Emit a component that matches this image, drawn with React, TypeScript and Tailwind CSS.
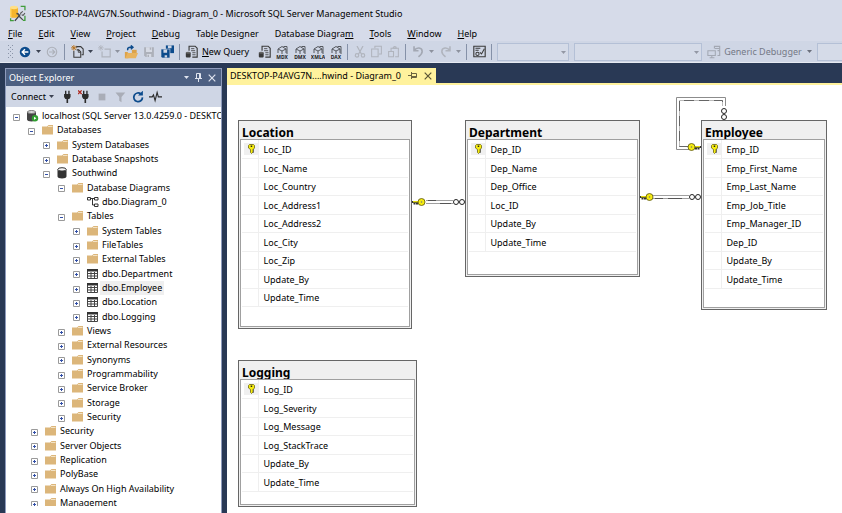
/**
 * Database diagram workspace
 *
 * - Title bar, menu bar and main toolbar
 * - Object Explorer tree on the left
 * - Diagram document with table cards and relationships
 */

import type { ReactNode } from "react";
import clsx from "clsx";

/* ---------- Icons ---------- */

function Icon({ children, size = 14 }: { children: ReactNode; size?: number }) {
  return (
    <svg width={size} height={size} viewBox="0 0 16 16" fill="none" className="shrink-0" aria-hidden="true">
      {children}
    </svg>
  );
}

function Caret({ color = "#3b4252" }: { color?: string }) {
  return (
    <svg width="5" height="3" viewBox="0 0 5 3" className="shrink-0" aria-hidden="true">
      <path d="M0 0h5L2.5 3z" fill={color} />
    </svg>
  );
}

const AppLogo = () => (
  <Icon size={17}>
    <path d="M1 2.5v8c0 1 1.6 1.6 3.6 1.6s3.900-.6 3.900-1.600v-8z" fill="#f5b52c" />
    <path d="M1 2.5v8c0 .6.5 1 1.300 1.300V2.500z" fill="#ffd76a" />
    <ellipse cx="4.7" cy="2.3" rx="3.7" ry="1.6" fill="#ffdf86" />
    <path d="M11 1.200h4V5M15 10v4.500h-2M1.500 12.500v2.300h3" stroke="#3f9c3a" strokeWidth="1.2" />
    <path d="M5.500 15l5-6" stroke="#3c3c3c" strokeWidth="1.2" />
    <path d="M7 8c2 0 2.500 1 2.500 2.500l3.500 3.500" stroke="#4a4a4a" strokeWidth="1.2" />
    <path d="M11 9V7.500L13 6M12 9.500h1.500l1.500-2" stroke="#555" />
  </Icon>
);

const BackIcon = () => (
  <Icon size={12}>
    <circle cx="8" cy="8" r="7" fill="#0c4b8c" />
    <path d="M12.500 8h-8M8 4.300 4.300 8 8 11.700" stroke="#fff" strokeWidth="1.9" />
  </Icon>
);

const ForwardIcon = () => (
  <Icon size={12}>
    <circle cx="8" cy="8" r="6.300" stroke="#adb1ba" strokeWidth="1.5" />
    <path d="M4 8h7.500M8.500 4.800 11.700 8l-3.200 3.200" stroke="#adb1ba" strokeWidth="1.6" />
  </Icon>
);

const NewProjectIcon = () => (
  <Icon size={13}>
    <path d="M7 3.500V2h5l3 3v7h-2" stroke="#3a3a3a" strokeWidth="1.3" />
    <path d="M3.500 7.500V15H12V8.500L9.500 6H7" stroke="#3a3a3a" strokeWidth="1.3" />
    <path d="M9 6v3h3" stroke="#3a3a3a" />
    <path d="M3.500 0v7M0 3.500h7M1 1l5 5M6 1 1 6" stroke="#b8731c" strokeWidth="1.1" />
  </Icon>
);

const AddItemIcon = () => (
  <Icon size={13}>
    <path d="M8 5h7v9.500H5V8" stroke="#b0b4bd" strokeWidth="1.5" />
    <path d="M3.500 0v7M0 3.500h7M1 1l5 5M6 1 1 6" stroke="#b0b4bd" />
  </Icon>
);

const OpenIcon = () => (
  <Icon>
    <path d="M1 8h3l1 1.500V15H1z" fill="#dca24a" />
    <path d="M9 5.500h5.500V10H9z" fill="#dca24a" />
    <path d="M4 9h12l-2.500 6h-12z" fill="#e8b35e" />
    <path d="M4.500 6C3.500 4 5 2.500 7.500 2.500H10M7.800.5l2.400 2-2.400 2.300" stroke="#0c4b8c" strokeWidth="1.7" />
  </Icon>
);

const SaveIcon = () => (
  <Icon size={12}>
    <path d="M1.500 1.500h13v13h-11l-2-2z" fill="#adb1ba" />
    <path d="M4 1.500h8V8H4zM5 10.500h6v4H5z" fill="#d6dae4" />
    <path d="M6 11.500h2v3H6zM9 2h2v3H9z" fill="#adb1ba" />
  </Icon>
);

const SaveAllIcon = () => (
  <Icon size={13}>
    <path d="M6 .5h10V10H6z" fill="#0c4b8c" />
    <path d="M8.500.5H13V4H8.500z" fill="#cfd6e5" />
    <path d="M0 5h11v11H1.500L0 14.500z" fill="#0c4b8c" stroke="#cfd6e5" strokeWidth=".8" />
    <path d="M3 5.500h4.500v4H3zM4.500 12.500h3v3h-3z" fill="#cfd6e5" />
  </Icon>
);

const QueryIcon = () => (
  <Icon size={13}>
    <path d="M5 7V1.500h7.500L15 4v11H9" stroke="#3a3a3a" strokeWidth="1.4" />
    <path d="M7.500 4.500h4M7.500 7h5M9 9.500h4M9 12h4" stroke="#3a3a3a" />
    <path d="M1 9.500h6V14c0 1-1.300 1.500-3 1.500S1 15 1 14z" fill="#3a3a3a" />
    <ellipse cx="4" cy="9.500" rx="3" ry="1.300" fill="#666" />
  </Icon>
);

/* Cube over a short language tag (MDX, DMX, XMLA, DAX) */
function CubeQueryIcon({ tag }: { tag: string }) {
  return (
    <svg width="14" height="14" viewBox="0 0 14 14" fill="none" aria-hidden="true">
      <path d="M3 8V4l4-2.500L11 4v4M3 4l4 2 4-2M7 6v3M8.500 1.500H12V9" stroke="#55585e" />
      <text x="7" y="13.5" textAnchor="middle" fontSize="5" fontWeight="700" fill="#222">
        {tag}
      </text>
    </svg>
  );
}

const CutIcon = () => (
  <Icon size={12}>
    <path d="M4 0l6 11M12 0 6 11" stroke="#b0b4bd" strokeWidth="1.6" />
    <circle cx="4" cy="12.500" r="2.300" stroke="#b0b4bd" strokeWidth="1.5" />
    <circle cx="12" cy="12.500" r="2.300" stroke="#b0b4bd" strokeWidth="1.5" />
  </Icon>
);

const CopyIcon = () => (
  <Icon size={13}>
    <path d="M6 4V1.500h8V11h-3" stroke="#b0b4bd" strokeWidth="1.3" />
    <path d="M2 5h8v9.500H2z" stroke="#b0b4bd" strokeWidth="1.3" />
  </Icon>
);

const PasteIcon = () => (
  <Icon size={13}>
    <path d="M5 8V4h9v10.500h-4" stroke="#b0b4bd" strokeWidth="1.3" />
    <path d="M7.500 4a2 2 0 0 1 4 0z" stroke="#b0b4bd" strokeWidth="1.3" />
    <path d="M2 8h6v6.500H2z" stroke="#b0b4bd" strokeWidth="1.3" />
  </Icon>
);

const UndoIcon = () => (
  <Icon size={13}>
    <path
      d="M2.500 1.500V7H8M3 6.500C5.500 2.500 12.500 2.500 12.500 8c0 3-2 4.500-4.500 6.500"
      stroke="#a3a8b3"
      strokeWidth="2"
    />
  </Icon>
);

const RedoIcon = () => (
  <Icon size={13}>
    <path
      d="M13.500 1.500V7H8M13 6.500C10.500 2.500 3.500 2.500 3.500 8c0 3 2 4.500 4.500 6.500"
      stroke="#b0b4bd"
      strokeWidth="1.9"
    />
  </Icon>
);

const ActivityIcon = () => (
  <Icon size={13}>
    <path d="M1 14.500v-13h14v13z" stroke="#3a3a3a" strokeWidth="1.4" />
    <path d="M3 4h6M3 6.500h4M8.500 9l2 2L14 4.500" stroke="#3a3a3a" strokeWidth="1.3" />
    <circle cx="5.500" cy="11" r="2" stroke="#3a3a3a" strokeWidth="1.3" />
  </Icon>
);

const DebuggerIcon = () => (
  <Icon>
    <path d="M1 6.500h8.500V12H1zM5.500 12v2.500M3 14.500h5.500" stroke="#a3a8b3" strokeWidth="1.2" />
    <path d="M8.500 4V1.500h6V12H12M9 4h5M12 6.500h2" stroke="#a3a8b3" strokeWidth="1.3" />
  </Icon>
);

const PlugIcon = ({ cross = false }: { cross?: boolean }) => (
  <Icon size={13}>
    <path d="M7 1v4M11 1v4" stroke="#2b2b2b" strokeWidth="1.7" />
    <path d="M5 5h8v3.500L11.500 11h-5L5 8.500z" fill="#2b2b2b" />
    <path d="M9 11v5" stroke="#2b2b2b" strokeWidth="2" />
    {cross && <path d="M0 .5 4.500 5M4.500.5 0 5" stroke="#b0281e" strokeWidth="1.6" />}
  </Icon>
);

const StopIcon = () => (
  <Icon size={12}>
    <path d="M3.500 3.500h9v9h-9z" fill="#a9adb7" />
  </Icon>
);

const FilterIcon = () => (
  <Icon size={12}>
    <path d="M2 2h13l-5 6v7l-3-2V8z" fill="#a9adb7" />
  </Icon>
);

const RefreshIcon = () => (
  <Icon size={12}>
    <path d="M12 4A5.800 5.800 0 1 0 14 8.500" stroke="#0c4b8c" strokeWidth="2.3" />
    <path d="M8 6h6.500V-.5z" fill="#0c4b8c" />
  </Icon>
);

const PulseIcon = () => (
  <Icon size={13}>
    <path d="M0 8.500h4L5.500 6l2 7L10 3l1.500 5.500H16" stroke="#2b2b2b" strokeWidth="1.4" />
  </Icon>
);

const PinIcon = ({ color, className }: { color: string; className?: string }) => (
  <svg width="7" height="9" viewBox="0 0 7 9" fill="none" className={className} aria-hidden="true">
    <path d="M1.500 5V.5h4V5M4.500.5V5M0 5.500h7M3.500 5.500V9" stroke={color} />
  </svg>
);

const CloseIcon = ({ color }: { color: string }) => (
  <svg width="8" height="8" viewBox="0 0 8 8" fill="none" aria-hidden="true">
    <path d="M.7.7l6.600 6.600M7.300.7.7 7.300" stroke={color} strokeWidth="1.2" />
  </svg>
);

const FolderIcon = () => (
  <svg width="12" height="12" viewBox="0 0 12 12" aria-hidden="true">
    <path d="M0 2.500h5L6.500 1H11v9.500H0z" fill="#dcb67a" />
    <path d="M6 2.500h4.500" stroke="#f3e3c6" />
  </svg>
);

const DatabaseIcon = () => (
  <svg width="12" height="12" viewBox="0 0 12 12" aria-hidden="true">
    <path d="M.5 2.500v7c0 1.200 2 2 4.500 2s4.500-.8 4.500-2v-7z" fill="#333" />
    <ellipse cx="5" cy="2.400" rx="4.200" ry="1.700" fill="#f6f6f6" stroke="#333" />
  </svg>
);

const ServerIcon = () => (
  <svg width="12" height="12" viewBox="0 0 12 12" aria-hidden="true">
    <path d="M0 1.800v7.700c0 1.300 2 2 4.500 2s4.500-.7 4.500-2V1.800z" fill="#444" />
    <ellipse cx="4.500" cy="2" rx="4" ry="1.500" fill="#d8d8d8" stroke="#777" />
    <circle cx="8" cy="8.300" r="3.200" fill="#2f9e2f" />
    <path d="M7 6.800v3l2.400-1.500z" fill="#fff" />
  </svg>
);

const TableIcon = () => (
  <svg width="12" height="12" viewBox="0 0 12 12" fill="none" aria-hidden="true">
    <path d="M.5 1.500h10v9H.5zM.5 5.500h10M.5 8h10M4 4v6.500M7.500 4v6.500" stroke="#444" />
    <path d="M0 1h11v2.500H0z" fill="#333" />
  </svg>
);

const DiagramIcon = () => (
  <svg width="12" height="12" viewBox="0 0 12 12" fill="none" aria-hidden="true">
    <path
      d="M.5 1.500h3V4h-3zM7.500 1.500H11V4H7.500zM7.500 8H11v2.500H7.500zM3.500 2.500h4M5.500 2.500V9h2"
      stroke="#333"
    />
  </svg>
);

const KeyIcon = () => (
  <svg width="7" height="10" viewBox="0 0 7 10" aria-hidden="true">
    <path
      d="M1.500.5h4l1 1V4L5 5.500V8L3.500 9.500l-1-1v-3L.5 4V1.500z"
      fill="#f6ec10"
      stroke="#6b6410"
      strokeWidth=".8"
    />
    <path d="M2.700 1.500h1.500V3H2.700zM5 5.500h1v1H5zM5 7.500h1v1H5z" fill="#222" />
  </svg>
);

/* ---------- Title, menu, toolbar ---------- */

/* Text before the access key, the key itself, text after it */
const MENU: [string, string, string][] = [
  ["", "F", "ile"],
  ["", "E", "dit"],
  ["", "V", "iew"],
  ["", "P", "roject"],
  ["", "D", "ebug"],
  ["Tab", "l", "e Designer"],
  ["Database Diagra", "m", ""],
  ["", "T", "ools"],
  ["", "W", "indow"],
  ["", "H", "elp"],
];

interface ToolButtonProps {
  label: string;
  children: ReactNode;
  disabled?: boolean;
  narrow?: boolean;
}

function ToolButton({ label, children, disabled, narrow }: ToolButtonProps) {
  return (
    <button
      type="button"
      aria-label={label}
      disabled={disabled}
      className={clsx("flex h-5 shrink-0 items-center justify-center", narrow ? "w-[17px]" : "w-[18px]")}
    >
      {children}
    </button>
  );
}

function DropButton({ label, muted }: { label: string; muted?: boolean }) {
  return (
    <button type="button" aria-label={label} className="flex h-5 w-[9px] shrink-0 items-center justify-center">
      <Caret color={muted ? "#8d929e" : "#3b4252"} />
    </button>
  );
}

const Separator = () => <span className="mx-[3px] h-4 w-px shrink-0 bg-[#8591a8]" />;

function Combo({ label, className }: { label: string; className: string }) {
  return (
    <span className={clsx("relative flex h-[18px] shrink-0", className)}>
      <select
        aria-label={label}
        disabled
        className="w-full appearance-none border border-[#b4c0d6] bg-[#d5dbe8]"
      />
      <span className="absolute right-[3px] top-[8px]">
        <Caret color="#9398a4" />
      </span>
    </span>
  );
}

function MainToolbar() {
  return (
    <div className="flex h-[21px] items-center overflow-hidden bg-[#cfd6e5] pl-2">
      <svg width="6" height="14" aria-hidden="true" className="mr-[2px] shrink-0">
        <pattern id="grip" width="4" height="4" patternUnits="userSpaceOnUse">
          <path d="M0 0h1v1H0zM2 2h1v1H2z" fill="#8a94a8" />
        </pattern>
        <rect width="6" height="14" fill="url(#grip)" />
      </svg>
      <ToolButton label="Navigate backward"><BackIcon /></ToolButton>
      <DropButton label="Backward history" />
      <ToolButton label="Navigate forward" disabled><ForwardIcon /></ToolButton>
      <Separator />
      <ToolButton label="New project"><NewProjectIcon /></ToolButton>
      <DropButton label="New project options" />
      <ToolButton label="Add item" disabled><AddItemIcon /></ToolButton>
      <DropButton label="Add item options" muted />
      <ToolButton label="Open file"><OpenIcon /></ToolButton>
      <ToolButton label="Save" disabled><SaveIcon /></ToolButton>
      <ToolButton label="Save all"><SaveAllIcon /></ToolButton>
      <Separator />
      <button type="button" className="flex h-5 shrink-0 items-center gap-1 px-[2px]">
        <QueryIcon />
        <span><u>N</u>ew Query</span>
      </button>
      <span className="w-1 shrink-0" />
      <ToolButton label="Database engine query"><QueryIcon /></ToolButton>
      <ToolButton label="MDX query"><CubeQueryIcon tag="MDX" /></ToolButton>
      <ToolButton label="DMX query"><CubeQueryIcon tag="DMX" /></ToolButton>
      <ToolButton label="XMLA query"><CubeQueryIcon tag="XMLA" /></ToolButton>
      <ToolButton label="DAX query" narrow><CubeQueryIcon tag="DAX" /></ToolButton>
      <Separator />
      <ToolButton label="Cut" disabled narrow><CutIcon /></ToolButton>
      <ToolButton label="Copy" disabled narrow><CopyIcon /></ToolButton>
      <ToolButton label="Paste" disabled narrow><PasteIcon /></ToolButton>
      <Separator />
      <ToolButton label="Undo" disabled><UndoIcon /></ToolButton>
      <DropButton label="Undo history" muted />
      <ToolButton label="Redo" disabled><RedoIcon /></ToolButton>
      <DropButton label="Redo history" muted />
      <Separator />
      <ToolButton label="Activity monitor"><ActivityIcon /></ToolButton>
      <Separator />
      <Combo label="Solution configuration" className="ml-[2px] w-[72px]" />
      <Combo label="Solution platform" className="ml-[5px] w-32" />
      <button type="button" disabled className="ml-[5px] flex h-5 shrink-0 items-center gap-[3px] text-[#747985]">
        <DebuggerIcon />
        <span>Generic Debugger</span>
        <span className="ml-[2px]"><Caret color="#6b707c" /></span>
      </button>
      <input
        aria-label="Find"
        className="ml-[5px] h-[18px] w-0 min-w-0 flex-1 border border-r-0 border-[#b4c0d6] bg-[#d5dbe8]"
      />
    </div>
  );
}

/* ---------- Object Explorer ---------- */

type NodeKind = "server" | "folder" | "database" | "table" | "diagram";

interface TreeNode {
  label: string;
  depth: string;
  kind: NodeKind;
  open?: boolean;
  selected?: boolean;
}

const D0 = "pl-[7px]";
const D1 = "pl-[22px]";
const D1_SERVER = "pl-[25px]";
const D2 = "pl-[37px]";
const D3 = "pl-[52px]";
const D4 = "pl-[67px]";

const TREE: TreeNode[] = [
  { label: "localhost (SQL Server 13.0.4259.0 - DESKTOP", depth: D0, kind: "server", open: true },
  { label: "Databases", depth: D1, kind: "folder", open: true },
  { label: "System Databases", depth: D2, kind: "folder" },
  { label: "Database Snapshots", depth: D2, kind: "folder" },
  { label: "Southwind", depth: D2, kind: "database", open: true },
  { label: "Database Diagrams", depth: D3, kind: "folder", open: true },
  { label: "dbo.Diagram_0", depth: D4, kind: "diagram" },
  { label: "Tables", depth: D3, kind: "folder", open: true },
  { label: "System Tables", depth: D4, kind: "folder" },
  { label: "FileTables", depth: D4, kind: "folder" },
  { label: "External Tables", depth: D4, kind: "folder" },
  { label: "dbo.Department", depth: D4, kind: "table" },
  { label: "dbo.Employee", depth: D4, kind: "table", selected: true },
  { label: "dbo.Location", depth: D4, kind: "table" },
  { label: "dbo.Logging", depth: D4, kind: "table" },
  { label: "Views", depth: D3, kind: "folder" },
  { label: "External Resources", depth: D3, kind: "folder" },
  { label: "Synonyms", depth: D3, kind: "folder" },
  { label: "Programmability", depth: D3, kind: "folder" },
  { label: "Service Broker", depth: D3, kind: "folder" },
  { label: "Storage", depth: D3, kind: "folder" },
  { label: "Security", depth: D3, kind: "folder" },
  { label: "Security", depth: D1_SERVER, kind: "folder" },
  { label: "Server Objects", depth: D1_SERVER, kind: "folder" },
  { label: "Replication", depth: D1_SERVER, kind: "folder" },
  { label: "PolyBase", depth: D1_SERVER, kind: "folder" },
  { label: "Always On High Availability", depth: D1_SERVER, kind: "folder" },
  { label: "Management", depth: D1_SERVER, kind: "folder" },
];

const NODE_ICONS: Record<NodeKind, () => ReactNode> = {
  server: ServerIcon,
  folder: FolderIcon,
  database: DatabaseIcon,
  table: TableIcon,
  diagram: DiagramIcon,
};

function Expander({ open, label }: { open?: boolean; label: string }) {
  return (
    <button type="button" aria-label={label} aria-expanded={!!open} className="mt-[2px] block">
      <svg width="7" height="7" viewBox="0 0 7 7" fill="none" aria-hidden="true">
        <path d="M.5.5h6v6h-6z" fill="#fff" stroke="#9a9a9a" />
        <path d={open ? "M2 3.500h3" : "M2 3.500h3M3.500 2v3"} stroke="#3350a8" />
      </svg>
    </button>
  );
}

function ObjectExplorer() {
  return (
    <aside className="flex w-[217px] shrink-0 flex-col border border-b-0 border-[#8e9bbc] bg-white">
      <header className="flex h-[17px] shrink-0 items-center gap-[6px] bg-[#4d6082] pl-[3px] pr-[5px] text-white">
        <h2 className="flex-1">Object Explorer</h2>
        <button type="button" aria-label="Window position"><Caret color="#dfe4ef" /></button>
        <button type="button" aria-label="Auto hide"><PinIcon color="#dfe4ef" /></button>
        <button type="button" aria-label="Close Object Explorer"><CloseIcon color="#dfe4ef" /></button>
      </header>
      <div className="flex h-[21px] shrink-0 items-center bg-[#cfd6e5] pl-[5px]">
        <button type="button" className="mr-1 flex items-center gap-[3px]">
          Connect <Caret />
        </button>
        <ToolButton label="Connect object explorer"><PlugIcon /></ToolButton>
        <ToolButton label="Disconnect"><PlugIcon cross /></ToolButton>
        <ToolButton label="Stop" disabled narrow><StopIcon /></ToolButton>
        <ToolButton label="Filter" disabled><FilterIcon /></ToolButton>
        <ToolButton label="Refresh"><RefreshIcon /></ToolButton>
        <ToolButton label="Activity" narrow><PulseIcon /></ToolButton>
      </div>
      <ul className="mb-[7px] mt-[2px] min-h-0 flex-1 overflow-hidden">
        {TREE.map((node, i) => {
          const NodeIcon = NODE_ICONS[node.kind];
          return (
            <li key={i} className={clsx("flex h-[14px] items-center nth-[3n]:h-[15px]", node.depth)}>
              <span className="w-[14px] shrink-0">
                {node.kind !== "diagram" && <Expander open={node.open} label={node.label} />}
              </span>
              <span className="w-[13px] shrink-0"><NodeIcon /></span>
              <span
                className={clsx("whitespace-nowrap px-[2px] leading-[14px]", node.selected && "bg-[#efefef]")}
              >
                {node.label}
              </span>
            </li>
          );
        })}
      </ul>
    </aside>
  );
}

/* ---------- Diagram ---------- */

interface DiagramTable {
  name: string;
  box: string;
  columns: string[];
}

const DIAGRAM_TABLES: DiagramTable[] = [
  {
    name: "Location",
    box: "left-[11px] top-[36px] w-[174px] h-[209px]",
    columns: [
      "Loc_ID",
      "Loc_Name",
      "Loc_Country",
      "Loc_Address1",
      "Loc_Address2",
      "Loc_City",
      "Loc_Zip",
      "Update_By",
      "Update_Time",
    ],
  },
  {
    name: "Department",
    box: "left-[238px] top-[36px] w-[175px] h-[157px]",
    columns: ["Dep_ID", "Dep_Name", "Dep_Office", "Loc_ID", "Update_By", "Update_Time"],
  },
  {
    name: "Employee",
    box: "left-[474px] top-[36px] w-[126px] h-[190px]",
    columns: [
      "Emp_ID",
      "Emp_First_Name",
      "Emp_Last_Name",
      "Emp_Job_Title",
      "Emp_Manager_ID",
      "Dep_ID",
      "Update_By",
      "Update_Time",
    ],
  },
  {
    name: "Logging",
    box: "left-[11px] top-[276px] w-[179px] h-[147px]",
    columns: ["Log_ID", "Log_Severity", "Log_Message", "Log_StackTrace", "Update_By", "Update_Time"],
  },
];

function TableCard({ table }: { table: DiagramTable }) {
  return (
    <section className={clsx("absolute flex flex-col border border-[#666] bg-[#f0f0f0]", table.box)}>
      <h3 className="h-[18px] shrink-0 pl-[3px] pt-[3px] text-[12px] font-bold leading-[18px]">{table.name}</h3>
      <div className="mx-px mb-px flex-1 border border-[#a0a0a0] bg-white px-px">
        <table className="w-full border-collapse">
          <tbody>
            {table.columns.map((column, i) => (
              <tr key={column} className="h-[18px] border-b border-[#efefef] even:h-[19px]">
                <td className="w-[16px] border-r border-[#efefef] p-0">
                  {i === 0 && (
                    <span className="ml-[2px] flex h-[12px] items-center justify-end bg-[#f0f0f0] pr-[3px]">
                      <KeyIcon />
                    </span>
                  )}
                </td>
                <td className="p-0 pl-[5px] pt-[2px] leading-[14px]">{column}</td>
              </tr>
            ))}
          </tbody>
        </table>
      </div>
    </section>
  );
}

/* Primary key end of a relationship: tip at 0,0 and ring near 9,0 */
function KeyEnd({ transform }: { transform: string }) {
  return (
    <g transform={transform}>
      <path d="M0 0h7M2.500 0v2.500M5 0v2.500" stroke="#333" strokeWidth="2" />
      <path d="M1-.3h7" stroke="#f6ec10" strokeWidth="1.2" />
      <circle cx="9.500" cy="0" r="3.500" fill="#f6ec10" stroke="#55500f" strokeWidth=".8" />
      <circle cx="9.500" cy="0" r=".8" fill="#777" />
    </g>
  );
}

function ManyEnd({ transform }: { transform: string }) {
  return (
    <g transform={transform} fill="#fff" stroke="#222">
      <circle cx="3" cy="0" r="2.500" />
      <circle cx="9" cy="0" r="2.500" />
    </g>
  );
}

function Relationships() {
  return (
    <svg className="absolute left-0 top-0" width="615" height="200" fill="none" aria-hidden="true">
      {/* Location to Department */}
      <path d="M199 116.500h27M199 119.500h27" stroke="#a0a0a0" />
      <path d="M201 116.500h8M213 119.500h11" stroke="#555" />
      <KeyEnd transform="translate(185 118)" />
      <ManyEnd transform="translate(226 118)" />

      {/* Department to Employee */}
      <path d="M426 111.500h36M426 114.500h36" stroke="#a0a0a0" />
      <path d="M428 114.500h8M441 114.500h14" stroke="#555" />
      <KeyEnd transform="translate(413 113)" />
      <ManyEnd transform="translate(462 113)" />

      {/* Employee manager, back to Employee */}
      <path d="M462 65.500H449.500V13.500H498.500V22" stroke="#8c8c8c" />
      <path d="M462 62.500H452.500V16.500H495.500V22" stroke="#bbb" />
      <path d="M462 62.500H452.500V16.500H495.500V22" stroke="#666" strokeDasharray="10 5" />
      <KeyEnd transform="translate(474 63) scale(-1 1)" />
      <ManyEnd transform="translate(497 24) rotate(90)" />
    </svg>
  );
}

function DiagramDocument() {
  return (
    <main className="flex min-w-0 flex-1 flex-col">
      <div className="flex h-[15px] shrink-0">
        <div className="flex items-center bg-[#fff29d] pl-[3px] pr-1">
          <h2 className="whitespace-nowrap">DESKTOP-P4AVG7N....hwind - Diagram_0</h2>
          <button type="button" aria-label="Pin tab" className="ml-2">
            <PinIcon color="#6b6440" className="rotate-90" />
          </button>
          <button type="button" aria-label="Close tab" className="ml-2">
            <CloseIcon color="#5b5535" />
          </button>
        </div>
      </div>
      <div className="relative flex-1 overflow-hidden border-t-2 border-[#fff29d] bg-white">
        <div className="absolute inset-x-0 -top-px bottom-0">
          <Relationships />
          {DIAGRAM_TABLES.map((table) => (
            <TableCard key={table.name} table={table} />
          ))}
        </div>
      </div>
    </main>
  );
}

export default function App() {
  return (
    <div className="flex h-screen flex-col overflow-hidden bg-[#293955] font-['Noto_Sans','Open_Sans',sans-serif] text-[9px] leading-[14px] text-black">
      <div className="shrink-0 border-b border-[#e6eaf2] bg-[#d6dbe9]">
        <header className="flex h-[27px] items-center gap-[9px] pl-[9px]">
          <AppLogo />
          <h1>DESKTOP-P4AVG7N.Southwind - Diagram_0 - Microsoft SQL Server Management Studio</h1>
        </header>
        <nav className="flex h-[14px] items-center gap-4 pl-2">
          {MENU.map(([before, key, after]) => (
            <button key={before + key + after} type="button" className="whitespace-nowrap">
              {before}
              <u>{key}</u>
              {after}
            </button>
          ))}
        </nav>
        <MainToolbar />
      </div>
      <div className="flex min-h-0 flex-1 gap-[5px] pl-[5px] pt-[5px]">
        <ObjectExplorer />
        <DiagramDocument />
      </div>
    </div>
  );
}
